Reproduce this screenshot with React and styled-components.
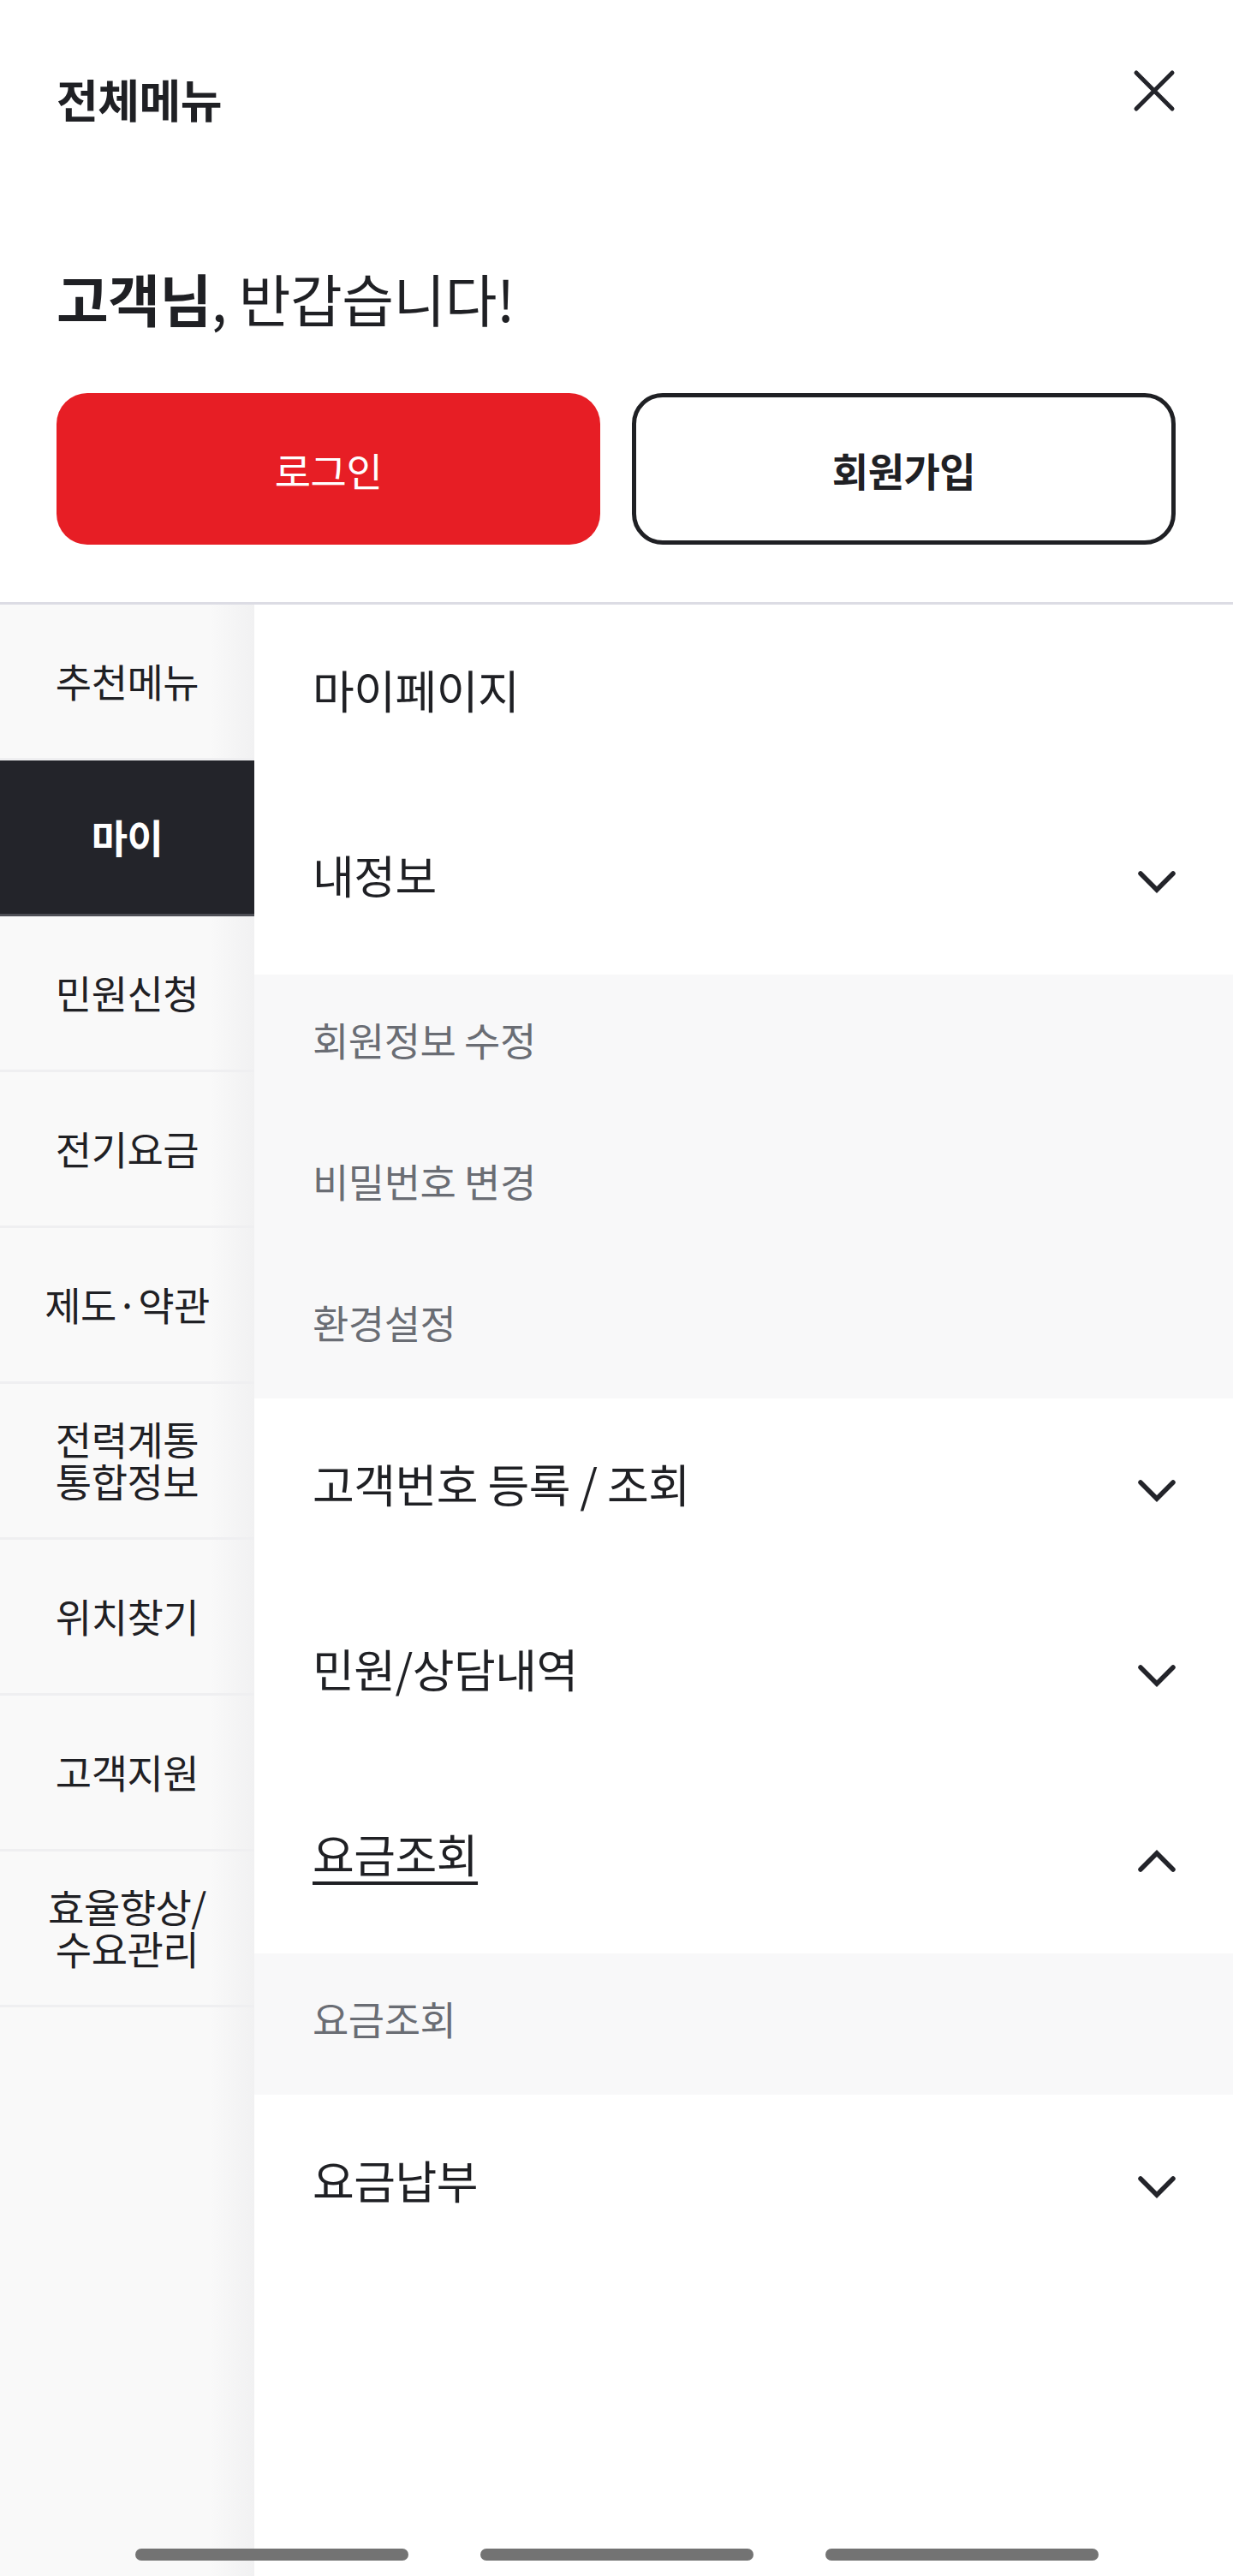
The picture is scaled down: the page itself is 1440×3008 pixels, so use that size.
import React from "react";
import styled, { createGlobalStyle } from "styled-components";

const GlobalStyle = createGlobalStyle`
  html, body {
    margin: 0;
    padding: 0;
    background: #ffffff;
  }
  body {
    font-family: "Noto Sans CJK KR", "Noto Sans", sans-serif;
    color: #1f2024;
  }
  * { box-sizing: border-box; }
`;

const Page = styled.div`
  position: relative;
  width: 1440px;
  min-height: 100vh;
  display: flex;
  flex-direction: column;
  background: #ffffff;
  overflow: hidden;
`;

const Header = styled.header`
  padding: 0 67px 67px 66px;
  border-bottom: 3px solid #dcdce4;
`;

const TitleRow = styled.div`
  height: 232px;
  display: flex;
  align-items: center;
  justify-content: space-between;
`;

const Title = styled.h1`
  margin: 0;
  font-size: 53px;
  font-weight: 700;
  line-height: 1.2;
  letter-spacing: -0.5px;
  color: #1f2024;
`;

const CloseButton = styled.button`
  width: 52px;
  height: 52px;
  padding: 0;
  margin: 0 -1px 20px 0;
  border: none;
  background: transparent;
  display: flex;
  align-items: center;
  justify-content: center;
  cursor: pointer;
`;

const Greeting = styled.p`
  margin: 75px 0 0;
  font-size: 66px;
  line-height: 80px;
  font-weight: 400;
  letter-spacing: -0.5px;
  color: #1f2024;
`;

const Strong = styled.strong`
  font-weight: 700;
`;

const ButtonRow = styled.div`
  margin-top: 72px;
  display: grid;
  grid-template-columns: 1fr 1fr;
  gap: 37px;
`;

const ActionButton = styled.button`
  height: 177px;
  border-radius: 36px;
  font-family: "Noto Sans CJK KR", "Noto Sans", sans-serif;
  font-size: 46px;
  letter-spacing: -0.5px;
  cursor: pointer;
  font-weight: ${(p) => (p.$primary ? 400 : 700)};
  color: ${(p) => (p.$primary ? "#ffffff" : "#1f2024")};
  background: ${(p) => (p.$primary ? "#e71e25" : "#ffffff")};
  border: ${(p) => (p.$primary ? "none" : "5px solid #1f2024")};
`;

const Body = styled.div`
  flex: 1;
  display: flex;
  align-items: stretch;
`;

const Sidebar = styled.nav`
  width: 297px;
  flex-shrink: 0;
  background: linear-gradient(90deg, #f9f9f9 0, #f9f9f9 245px, #f1f1f2 297px);
  display: flex;
  flex-direction: column;
`;

const SideItem = styled.div`
  height: 182px;
  display: flex;
  align-items: center;
  justify-content: center;
  text-align: center;
  font-size: 46px;
  line-height: 49px;
  letter-spacing: -0.5px;
  font-weight: ${(p) => (p.$active ? 700 : 400)};
  color: ${(p) => (p.$active ? "#ffffff" : "#1f2024")};
  background: ${(p) => (p.$active ? "#23242a" : "transparent")};
  border-bottom: 3px solid ${(p) => (p.$active ? "#4d4e55" : "#efeff1")};
`;

const SideLabel = styled.span`
  display: block;
  margin-bottom: 3px;
`;

const Content = styled.section`
  flex: 1;
  background: #ffffff;
  display: flex;
  flex-direction: column;
`;

const MainRow = styled.div`
  height: 216px;
  padding: 0 67px 0 68px;
  display: flex;
  align-items: center;
  justify-content: space-between;
  font-size: 53px;
  letter-spacing: -0.5px;
  color: #1f2024;
`;

const MainLabel = styled.span`
  margin-bottom: 18px;
  text-decoration: ${(p) => (p.$current ? "underline" : "none")};
  text-decoration-thickness: 4px;
  text-underline-offset: 10px;
`;

const SubList = styled.div`
  background: #f8f8f9;
  display: flex;
  flex-direction: column;
`;

const SubRow = styled.div`
  height: 165px;
  padding: 0 68px 16px;
  display: flex;
  align-items: center;
  font-size: 46px;
  letter-spacing: -0.5px;
  color: #6a6d74;
`;

const BottomBars = styled.div`
  position: absolute;
  left: 0;
  right: 0;
  bottom: 18px;
  display: flex;
  justify-content: center;
  gap: 84px;
  pointer-events: none;
`;

const Bar = styled.span`
  width: 319px;
  height: 14px;
  border-radius: 7px;
  background: #737373;
`;

const CloseIcon = () => (
  <svg width="52" height="52" viewBox="0 0 52 52" fill="none">
    <path
      d="M5 5 L47 47 M47 5 L5 47"
      stroke="#23242a"
      strokeWidth="5"
      strokeLinecap="round"
    />
  </svg>
);

const Chevron = ({ up }) => (
  <svg width="44" height="28" viewBox="0 0 44 28" fill="none">
    <polyline
      points={up ? "3,24 22,5 41,24" : "3,4 22,23 41,4"}
      stroke="#23242a"
      strokeWidth="5.5"
      strokeLinecap="round"
      strokeLinejoin="miter"
    />
  </svg>
);

const sideMenu = [
  { label: "추천메뉴" },
  { label: "마이", active: true },
  { label: "민원신청" },
  { label: "전기요금" },
  { label: "제도·약관" },
  { label: "전력계통\n통합정보" },
  { label: "위치찾기" },
  { label: "고객지원" },
  { label: "효율향상/\n수요관리" },
];

const sections = [
  { label: "마이페이지", chevron: false },
  {
    label: "내정보",
    chevron: true,
    children: ["회원정보 수정", "비밀번호 변경", "환경설정"],
  },
  { label: "고객번호 등록 / 조회", chevron: true },
  { label: "민원/상담내역", chevron: true },
  { label: "요금조회", chevron: true, open: true, current: true, children: ["요금조회"] },
  { label: "요금납부", chevron: true },
];

export default function App() {
  return (
    <Page>
      <GlobalStyle />
      <Header>
        <TitleRow>
          <Title>전체메뉴</Title>
          <CloseButton aria-label="닫기">
            <CloseIcon />
          </CloseButton>
        </TitleRow>
        <Greeting>
          <Strong>고객님</Strong>, 반갑습니다!
        </Greeting>
        <ButtonRow>
          <ActionButton $primary>로그인</ActionButton>
          <ActionButton>회원가입</ActionButton>
        </ButtonRow>
      </Header>
      <Body>
        <Sidebar>
          {sideMenu.map((m) => (
            <SideItem key={m.label} $active={m.active}>
              <SideLabel>
                {m.label.split("\n").map((line, i) => (
                  <React.Fragment key={i}>
                    {i > 0 && <br />}
                    {line}
                  </React.Fragment>
                ))}
              </SideLabel>
            </SideItem>
          ))}
        </Sidebar>
        <Content>
          {sections.map((s) => (
            <React.Fragment key={s.label}>
              <MainRow>
                <MainLabel $current={s.current}>{s.label}</MainLabel>
                {s.chevron && <Chevron up={s.open} />}
              </MainRow>
              {s.children && (
                <SubList>
                  {s.children.map((c) => (
                    <SubRow key={c}>{c}</SubRow>
                  ))}
                </SubList>
              )}
            </React.Fragment>
          ))}
        </Content>
      </Body>
      <BottomBars>
        <Bar />
        <Bar />
        <Bar />
      </BottomBars>
    </Page>
  );
}
